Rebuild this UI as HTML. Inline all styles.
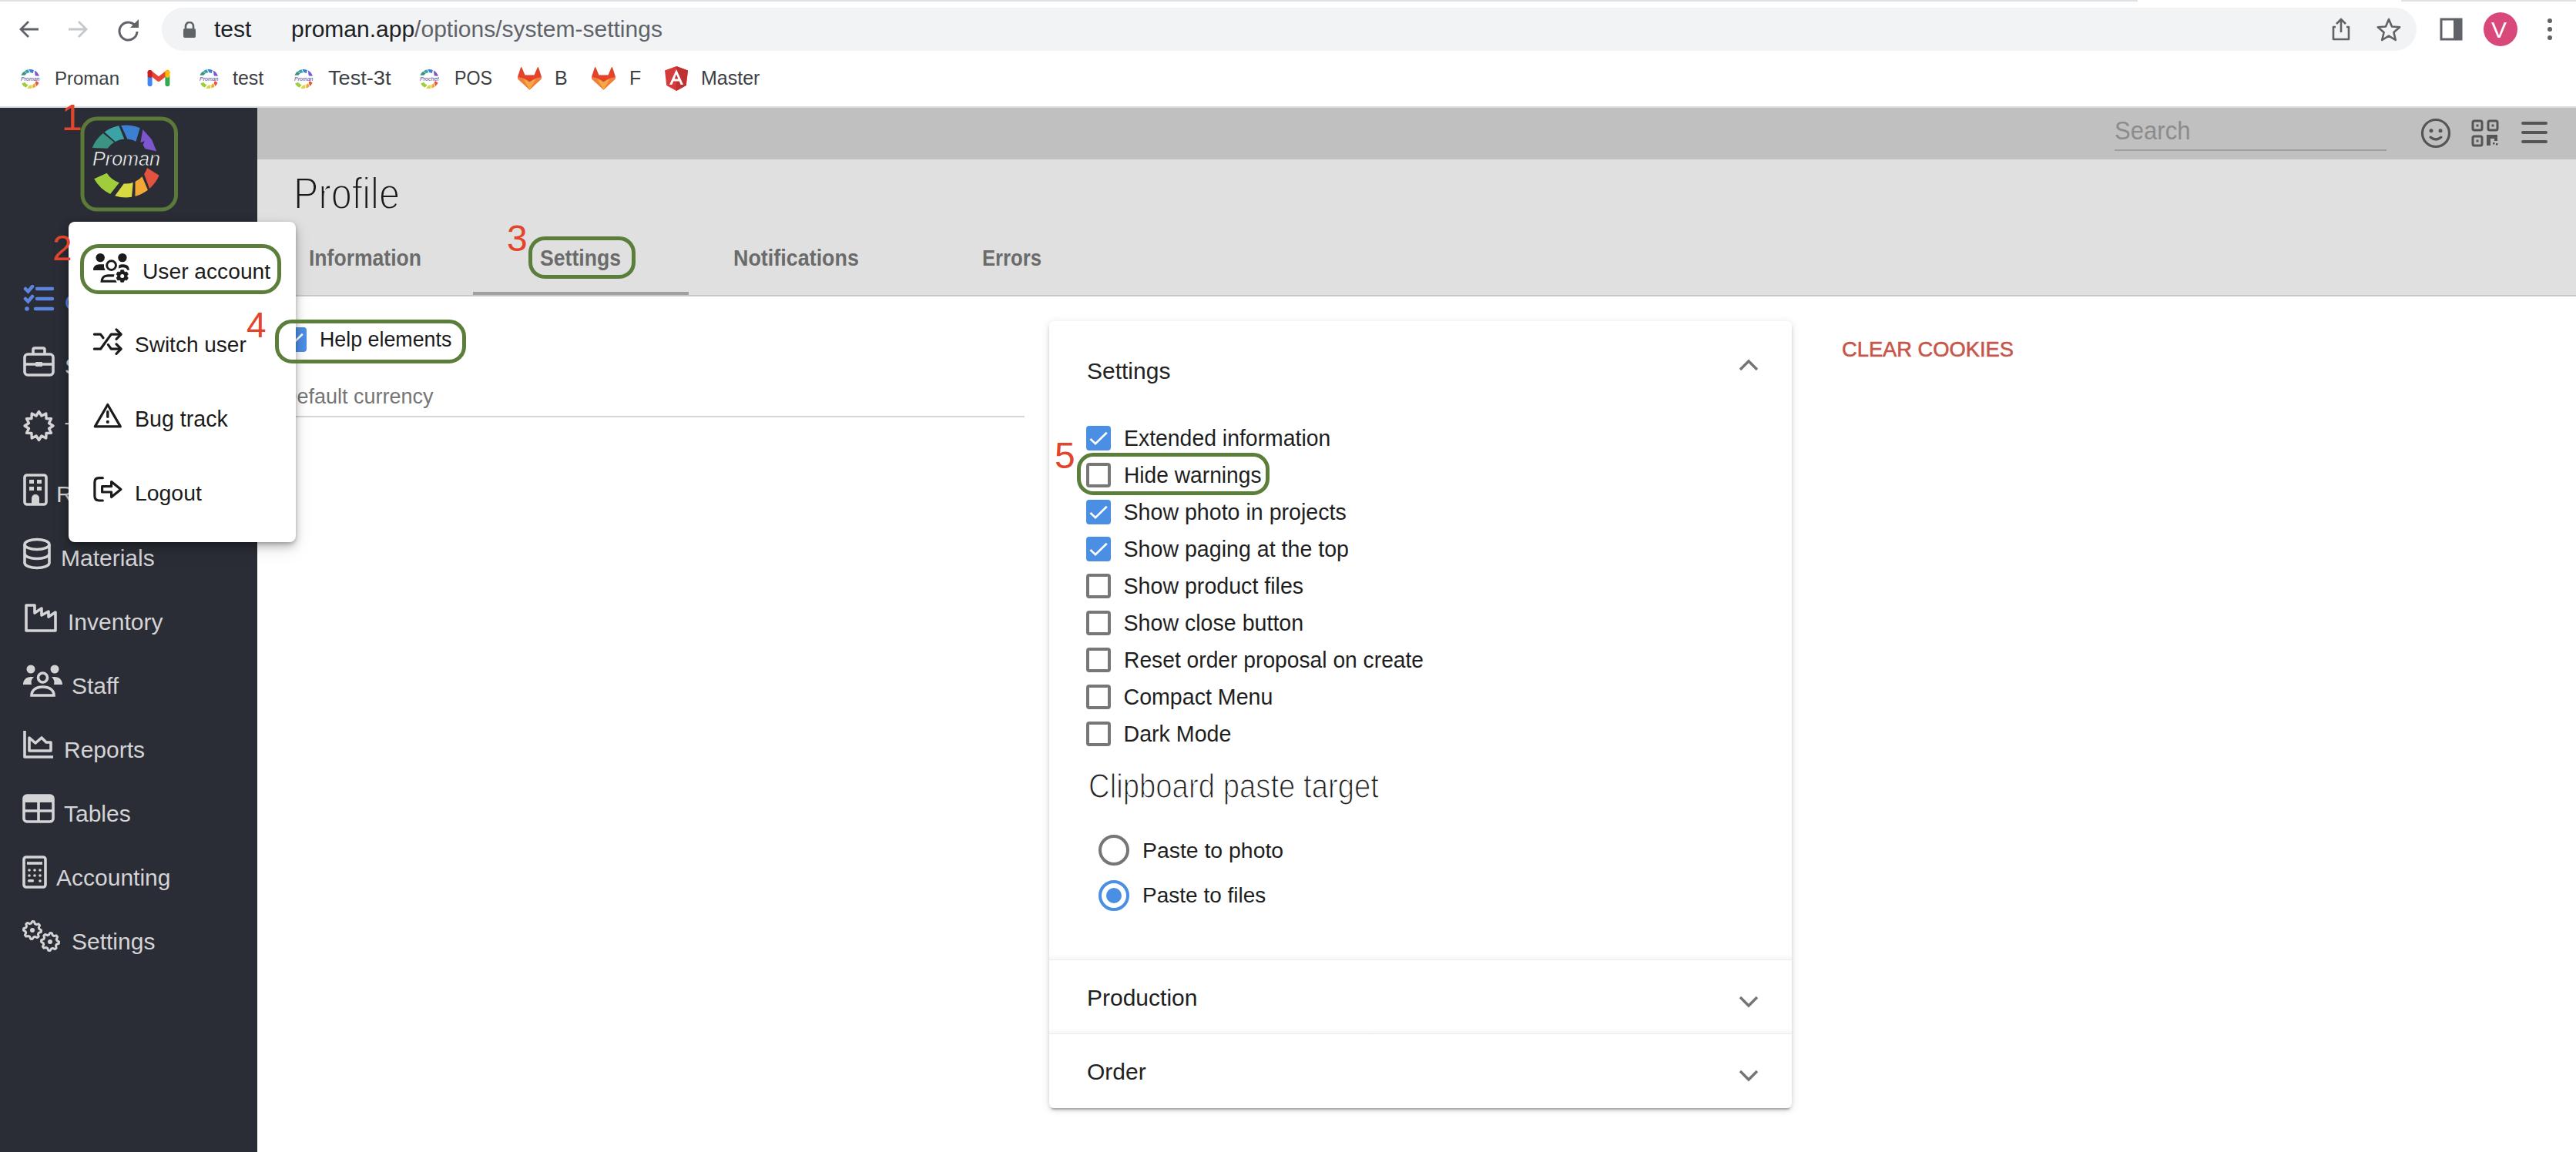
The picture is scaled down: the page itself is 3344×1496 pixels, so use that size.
<!DOCTYPE html>
<html><head><meta charset="utf-8"><style>
html,body{margin:0;padding:0;}
body{width:3344px;height:1496px;position:relative;overflow:hidden;background:#fff;font-family:"Liberation Sans",sans-serif;}
.t{position:absolute;white-space:nowrap;line-height:1;}
.r{position:absolute;box-sizing:content-box;}
</style></head><body>
<div class="r" style="left:0px;top:0px;width:3344px;height:140px;background:#ffffff;"></div>
<div class="r" style="left:0px;top:0px;width:2775px;height:2px;background:#dee1e6;"></div>
<div class="r" style="left:3117px;top:0px;width:227px;height:2px;background:#dee1e6;"></div>
<svg class="r" style="left:22px;top:22px;" width="32" height="32" viewBox="0 0 32 32"><path d="M28 16H6M15 6L5 16l10 10" fill="none" stroke="#5f6368" stroke-width="2.8"/></svg>
<svg class="r" style="left:85px;top:22px;" width="32" height="32" viewBox="0 0 32 32"><path d="M4 16h22M17 6l10 10-10 10" fill="none" stroke="#c4c7cb" stroke-width="2.8"/></svg>
<svg class="r" style="left:150px;top:22px;" width="34" height="34" viewBox="0 0 34 34"><path d="M26 12A11.5 11.5 0 1 0 28 19" fill="none" stroke="#5f6368" stroke-width="3"/><path d="M30 3v11H19z" fill="#5f6368"/></svg>
<div class="r" style="left:210px;top:10px;width:2927px;height:56px;background:#f1f3f4;border-radius:28px;"></div>
<svg class="r" style="left:236px;top:28px;" width="20" height="22" viewBox="0 0 20 22"><path d="M5 9V6a5 5 0 0 1 10 0v3" fill="none" stroke="#5f6368" stroke-width="2.6"/><rect x="2" y="9" width="16" height="12" rx="2" fill="#5f6368"/></svg>
<div class="t" style="left:278px;top:22.60px;font-size:30px;color:#202124;font-weight:400;font-family:'Liberation Sans', sans-serif;">test</div>
<div class="t" style="left:378px;top:22.60px;font-size:30px;color:#202124;font-weight:400;font-family:'Liberation Sans', sans-serif;">proman.app<span style="color:#5f6368">/options/system-settings</span></div>
<svg class="r" style="left:3024px;top:22px;" width="30" height="32" viewBox="0 0 30 32"><path d="M8 13H5v16h20V13h-3M15 3v17M9 9l6-6 6 6" fill="none" stroke="#5f6368" stroke-width="2.6" stroke-linejoin="round"/></svg>
<svg class="r" style="left:3084px;top:22px;" width="34" height="34" viewBox="0 0 34 34"><path d="M17 3l4 9.5 10.2.8-7.8 6.7 2.4 10L17 24.6 8.2 30l2.4-10-7.8-6.7 10.2-.8z" fill="none" stroke="#5f6368" stroke-width="2.6" stroke-linejoin="round"/></svg>
<svg class="r" style="left:3166px;top:22px;" width="32" height="32" viewBox="0 0 32 32"><rect x="3" y="3" width="26" height="26" fill="none" stroke="#5f6368" stroke-width="3"/><rect x="19" y="3" width="10" height="26" fill="#5f6368"/></svg>
<div class="r" style="left:3224px;top:16px;width:44px;height:44px;border-radius:50%;background:#d9487b;"></div>
<div class="t" style="left:3234px;top:23.60px;font-size:30px;color:#fff;font-weight:400;font-family:'Liberation Sans', sans-serif;font-weight:300;">V</div>
<div class="r" style="left:3307px;top:24px;width:6px;height:6px;border-radius:50%;background:#5f6368;"></div>
<div class="r" style="left:3307px;top:35px;width:6px;height:6px;border-radius:50%;background:#5f6368;"></div>
<div class="r" style="left:3307px;top:46px;width:6px;height:6px;border-radius:50%;background:#5f6368;"></div>
<svg class="r" style="left:26px;top:89px;" width="26" height="26" viewBox="0 0 26 26"><path d="M1.41 8.82A12.5 12.5 0 0 1 5.13 3.79L8.72 6.51A8.2 8.2 0 0 0 6.28 8.80Z" fill="#3a9383"/><path d="M5.65 3.39A12.5 12.5 0 0 1 10.61 1.23L12.43 5.32A8.2 8.2 0 0 0 9.15 6.26Z" fill="#3ba3a6"/><path d="M11.37 1.11A12.5 12.5 0 0 1 17.88 1.99L16.72 6.19A8.2 8.2 0 0 0 13.57 5.32Z" fill="#3d7fd2"/><path d="M18.87 2.46A12.5 12.5 0 0 1 24.89 9.64L20.10 9.40A8.2 8.2 0 0 0 19.63 8.68Z" fill="#7b56cf"/><path d="M2.07 19.56A12.5 12.5 0 0 0 7.62 24.78L10.60 21.34A8.2 8.2 0 0 1 6.05 17.85Z" fill="#9fcd3c"/><path d="M9.24 25.42A12.5 12.5 0 0 0 15.06 25.83L15.67 21.25A8.2 8.2 0 0 1 12.29 21.67Z" fill="#d6d942"/><path d="M16.24 25.57A12.5 12.5 0 0 0 20.61 23.42L19.00 19.09A8.2 8.2 0 0 1 16.47 20.93Z" fill="#f2a737"/><path d="M21.20 22.93A12.5 12.5 0 0 0 24.51 18.38L20.84 15.90A8.2 8.2 0 0 1 19.72 18.20Z" fill="#e4533f"/><text x="1" y="16" font-size="8" font-style="italic" textLength="24.5" lengthAdjust="spacingAndGlyphs" fill="#4b3d9a" font-family="Liberation Sans">Proman</text></svg>
<svg class="r" style="left:191px;top:90px;" width="30" height="23" viewBox="0 0 30 23"><g fill="none" stroke-width="6" stroke-linecap="round" stroke-linejoin="round"><path d="M3.6 9V19.3" stroke="#4285f4"/><path d="M26.4 9V19.3" stroke="#34a853"/><path d="M3.6 4L15 13L26.4 4" stroke="#ea4335"/><path d="M26.4 4V8" stroke="#fbbc04"/><path d="M3.6 4V8" stroke="#c5221f"/></g></svg>
<svg class="r" style="left:258px;top:89px;" width="26" height="26" viewBox="0 0 26 26"><path d="M1.41 8.82A12.5 12.5 0 0 1 5.13 3.79L8.72 6.51A8.2 8.2 0 0 0 6.28 8.80Z" fill="#3a9383"/><path d="M5.65 3.39A12.5 12.5 0 0 1 10.61 1.23L12.43 5.32A8.2 8.2 0 0 0 9.15 6.26Z" fill="#3ba3a6"/><path d="M11.37 1.11A12.5 12.5 0 0 1 17.88 1.99L16.72 6.19A8.2 8.2 0 0 0 13.57 5.32Z" fill="#3d7fd2"/><path d="M18.87 2.46A12.5 12.5 0 0 1 24.89 9.64L20.10 9.40A8.2 8.2 0 0 0 19.63 8.68Z" fill="#7b56cf"/><path d="M2.07 19.56A12.5 12.5 0 0 0 7.62 24.78L10.60 21.34A8.2 8.2 0 0 1 6.05 17.85Z" fill="#9fcd3c"/><path d="M9.24 25.42A12.5 12.5 0 0 0 15.06 25.83L15.67 21.25A8.2 8.2 0 0 1 12.29 21.67Z" fill="#d6d942"/><path d="M16.24 25.57A12.5 12.5 0 0 0 20.61 23.42L19.00 19.09A8.2 8.2 0 0 1 16.47 20.93Z" fill="#f2a737"/><path d="M21.20 22.93A12.5 12.5 0 0 0 24.51 18.38L20.84 15.90A8.2 8.2 0 0 1 19.72 18.20Z" fill="#e4533f"/><text x="1" y="16" font-size="8" font-style="italic" textLength="24.5" lengthAdjust="spacingAndGlyphs" fill="#4b3d9a" font-family="Liberation Sans">Proman</text></svg>
<svg class="r" style="left:381px;top:89px;" width="26" height="26" viewBox="0 0 26 26"><path d="M1.41 8.82A12.5 12.5 0 0 1 5.13 3.79L8.72 6.51A8.2 8.2 0 0 0 6.28 8.80Z" fill="#3a9383"/><path d="M5.65 3.39A12.5 12.5 0 0 1 10.61 1.23L12.43 5.32A8.2 8.2 0 0 0 9.15 6.26Z" fill="#3ba3a6"/><path d="M11.37 1.11A12.5 12.5 0 0 1 17.88 1.99L16.72 6.19A8.2 8.2 0 0 0 13.57 5.32Z" fill="#3d7fd2"/><path d="M18.87 2.46A12.5 12.5 0 0 1 24.89 9.64L20.10 9.40A8.2 8.2 0 0 0 19.63 8.68Z" fill="#7b56cf"/><path d="M2.07 19.56A12.5 12.5 0 0 0 7.62 24.78L10.60 21.34A8.2 8.2 0 0 1 6.05 17.85Z" fill="#9fcd3c"/><path d="M9.24 25.42A12.5 12.5 0 0 0 15.06 25.83L15.67 21.25A8.2 8.2 0 0 1 12.29 21.67Z" fill="#d6d942"/><path d="M16.24 25.57A12.5 12.5 0 0 0 20.61 23.42L19.00 19.09A8.2 8.2 0 0 1 16.47 20.93Z" fill="#f2a737"/><path d="M21.20 22.93A12.5 12.5 0 0 0 24.51 18.38L20.84 15.90A8.2 8.2 0 0 1 19.72 18.20Z" fill="#e4533f"/><text x="1" y="16" font-size="8" font-style="italic" textLength="24.5" lengthAdjust="spacingAndGlyphs" fill="#4b3d9a" font-family="Liberation Sans">Proman</text></svg>
<svg class="r" style="left:544px;top:89px;" width="26" height="26" viewBox="0 0 26 26"><path d="M1.41 8.82A12.5 12.5 0 0 1 5.13 3.79L8.72 6.51A8.2 8.2 0 0 0 6.28 8.80Z" fill="#3a9383"/><path d="M5.65 3.39A12.5 12.5 0 0 1 10.61 1.23L12.43 5.32A8.2 8.2 0 0 0 9.15 6.26Z" fill="#3ba3a6"/><path d="M11.37 1.11A12.5 12.5 0 0 1 17.88 1.99L16.72 6.19A8.2 8.2 0 0 0 13.57 5.32Z" fill="#3d7fd2"/><path d="M18.87 2.46A12.5 12.5 0 0 1 24.89 9.64L20.10 9.40A8.2 8.2 0 0 0 19.63 8.68Z" fill="#7b56cf"/><path d="M2.07 19.56A12.5 12.5 0 0 0 7.62 24.78L10.60 21.34A8.2 8.2 0 0 1 6.05 17.85Z" fill="#9fcd3c"/><path d="M9.24 25.42A12.5 12.5 0 0 0 15.06 25.83L15.67 21.25A8.2 8.2 0 0 1 12.29 21.67Z" fill="#d6d942"/><path d="M16.24 25.57A12.5 12.5 0 0 0 20.61 23.42L19.00 19.09A8.2 8.2 0 0 1 16.47 20.93Z" fill="#f2a737"/><path d="M21.20 22.93A12.5 12.5 0 0 0 24.51 18.38L20.84 15.90A8.2 8.2 0 0 1 19.72 18.20Z" fill="#e4533f"/><text x="1" y="16" font-size="8" font-style="italic" textLength="24.5" lengthAdjust="spacingAndGlyphs" fill="#4b3d9a" font-family="Liberation Sans">Prochef</text></svg>
<svg class="r" style="left:671px;top:86px;" width="33" height="32" viewBox="0 0 33 32"><path d="M5 1.5Q5.6 0.5 6.3 1.5L10.5 11.5H22.5L26.7 1.5Q27.4 0.5 28 1.5L31.6 12.5Q32.5 16 29.5 18.5L16.5 30.5L3.5 18.5Q0.5 16 1.4 12.5Z" fill="#e24329"/><path d="M1 14.5Q0.8 16.8 3.5 18.5L16.5 30.5L29.5 18.5Q32.2 16.8 32 14.5Q24.5 13.5 16.5 20.5Q8.5 13.5 1 14.5Z" fill="#f0803a"/><path d="M8.5 16.8L16.5 30.5L24.5 16.8Q20.5 17.8 16.5 20.5Q12.5 17.8 8.5 16.8Z" fill="#f4a744"/></svg>
<svg class="r" style="left:767px;top:86px;" width="33" height="32" viewBox="0 0 33 32"><path d="M5 1.5Q5.6 0.5 6.3 1.5L10.5 11.5H22.5L26.7 1.5Q27.4 0.5 28 1.5L31.6 12.5Q32.5 16 29.5 18.5L16.5 30.5L3.5 18.5Q0.5 16 1.4 12.5Z" fill="#e24329"/><path d="M1 14.5Q0.8 16.8 3.5 18.5L16.5 30.5L29.5 18.5Q32.2 16.8 32 14.5Q24.5 13.5 16.5 20.5Q8.5 13.5 1 14.5Z" fill="#f0803a"/><path d="M8.5 16.8L16.5 30.5L24.5 16.8Q20.5 17.8 16.5 20.5Q12.5 17.8 8.5 16.8Z" fill="#f4a744"/></svg>
<svg class="r" style="left:862px;top:85px;" width="32" height="34" viewBox="0 0 32 34"><path d="M16 1L1 6.5l2.3 19.5L16 33l12.7-7L31 6.5z" fill="#d63b3b"/><path d="M16 1v32l12.7-7L31 6.5z" fill="#bf3131"/><path d="M16 5L7 25h3.4l1.8-4.5h7.6l1.8 4.5H25zM13.6 17.4L16 11.6l2.4 5.8z" fill="#fff"/></svg>
<div class="t" style="left:71px;top:89.68px;font-size:24px;color:#3c4043;font-weight:400;font-family:'Liberation Sans', sans-serif;">Proman</div>
<div class="t" style="left:302px;top:88.83px;font-size:25px;color:#3c4043;font-weight:400;font-family:'Liberation Sans', sans-serif;">test</div>
<div class="t" style="left:426px;top:88.83px;font-size:25px;color:#3c4043;font-weight:400;font-family:'Liberation Sans', sans-serif;transform:scaleX(1.0863);transform-origin:0 0;">Test-3t</div>
<div class="t" style="left:590px;top:88.83px;font-size:25px;color:#3c4043;font-weight:400;font-family:'Liberation Sans', sans-serif;transform:scaleX(0.9281);transform-origin:0 0;">POS</div>
<div class="t" style="left:720px;top:88.83px;font-size:25px;color:#3c4043;font-weight:400;font-family:'Liberation Sans', sans-serif;">B</div>
<div class="t" style="left:817px;top:88.83px;font-size:25px;color:#3c4043;font-weight:400;font-family:'Liberation Sans', sans-serif;">F</div>
<div class="t" style="left:910px;top:88.83px;font-size:25px;color:#3c4043;font-weight:400;font-family:'Liberation Sans', sans-serif;">Master</div>
<div class="r" style="left:0px;top:138px;width:3344px;height:2px;background:#dadce0;"></div>
<div class="r" style="left:0px;top:140px;width:334px;height:1356px;background:#2a2d35;"></div>
<div class="r" style="left:334px;top:140px;width:3010px;height:67px;background:#c0c0c0;"></div>
<div class="r" style="left:334px;top:207px;width:3010px;height:177px;background:#e0e0e0;"></div>
<div class="r" style="left:334px;top:383px;width:3010px;height:2px;background:#c8c8c8;"></div>
<div class="r" style="left:334px;top:385px;width:3010px;height:1111px;background:#ffffff;"></div>
<div class="t" style="left:2745px;top:153.98px;font-size:32.5px;color:#8c8c8c;font-weight:400;font-family:'Liberation Sans', sans-serif;transform:scaleX(0.9565);transform-origin:0 0;">Search</div>
<div class="r" style="left:2745px;top:194px;width:353px;height:2px;background:#9e9e9e;"></div>
<svg class="r" style="left:3141px;top:152px;" width="42" height="42" viewBox="0 0 42 42"><circle cx="21" cy="21" r="17.5" fill="none" stroke="#555555" stroke-width="3.2"/><circle cx="15" cy="17.8" r="2.5" fill="#555555"/><circle cx="27" cy="17.8" r="2.5" fill="#555555"/><path d="M14.2 26.2q6.8 5.6 13.6 0" fill="none" stroke="#555555" stroke-width="3.4" stroke-linecap="round"/></svg>
<svg class="r" style="left:3208px;top:155px;" width="36" height="36" viewBox="0 0 36 36"><g fill="none" stroke="#555555" stroke-width="3"><rect x="2" y="2" width="12" height="12" rx="2"/><rect x="22" y="2" width="12" height="12" rx="2"/><rect x="2" y="22" width="12" height="12" rx="2"/></g><g fill="#555555"><rect x="6.5" y="6.5" width="3" height="3"/><rect x="26.5" y="6.5" width="3" height="3"/><rect x="6.5" y="26.5" width="3" height="3"/><rect x="20" y="20" width="5" height="14"/><rect x="25" y="20" width="5" height="5"/><rect x="30" y="20" width="4" height="8"/><rect x="28" y="30" width="2.5" height="2.5"/><rect x="32" y="31" width="2.5" height="2.5"/></g></svg>
<div class="r" style="left:3273px;top:158px;width:34px;height:4px;background:#555555;border-radius:2px;"></div>
<div class="r" style="left:3273px;top:170px;width:34px;height:4px;background:#555555;border-radius:2px;"></div>
<div class="r" style="left:3273px;top:182px;width:34px;height:4px;background:#555555;border-radius:2px;"></div>
<div class="t" style="left:381px;top:222.74px;font-size:57px;color:#1a1a1a;font-weight:400;font-family:'Liberation Sans', sans-serif;transform:scaleX(0.8541);transform-origin:0 0;-webkit-text-stroke:2px #e0e0e0;">Profile</div>
<div class="t" style="left:400.5px;top:320.78px;font-size:28.6px;color:#6b6b6b;font-weight:700;font-family:'Liberation Sans', sans-serif;transform:scaleX(0.9282);transform-origin:0 0;">Information</div>
<div class="t" style="left:701px;top:320.78px;font-size:28.6px;color:#6b6b6b;font-weight:700;font-family:'Liberation Sans', sans-serif;transform:scaleX(0.9307);transform-origin:0 0;">Settings</div>
<div class="t" style="left:952px;top:320.78px;font-size:28.6px;color:#6b6b6b;font-weight:700;font-family:'Liberation Sans', sans-serif;transform:scaleX(0.9411);transform-origin:0 0;">Notifications</div>
<div class="t" style="left:1275px;top:320.78px;font-size:28.6px;color:#6b6b6b;font-weight:700;font-family:'Liberation Sans', sans-serif;transform:scaleX(0.897);transform-origin:0 0;">Errors</div>
<div class="r" style="left:614px;top:379px;width:280px;height:4px;background:#a0a0a0;"></div>
<div class="r" style="left:366px;top:425px;width:32px;height:32px;background:#4b8fe5;border-radius:4px;"></div>
<svg class="r" style="left:366px;top:425px;" width="32" height="32" viewBox="0 0 32 32"><path d="M5.5 17L12 23.3L26.8 8.7" fill="none" stroke="#fff" stroke-width="2.6"/></svg>
<div class="t" style="left:415px;top:428.31px;font-size:26.8px;color:#1a1a1a;font-weight:400;font-family:'Liberation Sans', sans-serif;">Help elements</div>
<div class="t" style="left:366px;top:502.14px;font-size:27px;color:#757575;font-weight:400;font-family:'Liberation Sans', sans-serif;">Default currency</div>
<div class="r" style="left:366px;top:540px;width:964px;height:2px;background:#d6d6d6;"></div>
<div class="r" style="left:1362px;top:417px;width:964px;height:1022px;background:#fff;border-radius:6px;box-shadow:0 5px 2px -3px rgba(0,0,0,.2),0 3px 4px 0 rgba(0,0,0,.13),0 2px 12px 0 rgba(0,0,0,.11);"></div>
<div class="t" style="left:1411px;top:466.60px;font-size:30px;color:#212121;font-weight:400;font-family:'Liberation Sans', sans-serif;">Settings</div>
<svg class="r" style="left:2255px;top:463px;" width="30" height="22" viewBox="0 0 30 22"><path d="M4 17l11-11 11 11" fill="none" stroke="#757575" stroke-width="3.4"/></svg>
<div class="r" style="left:1410px;top:553px;width:32px;height:32px;background:#4b8fe5;border-radius:4px;"></div>
<svg class="r" style="left:1410px;top:553px;" width="32" height="32" viewBox="0 0 32 32"><path d="M5.5 17L12 23.3L26.8 8.7" fill="none" stroke="#fff" stroke-width="2.6"/></svg>
<div class="t" style="left:1458.5px;top:555.28px;font-size:28.6px;color:#1e1e1e;font-weight:400;font-family:'Liberation Sans', sans-serif;transform:scaleX(0.993);transform-origin:0 0;">Extended information</div>
<div class="r" style="left:1410px;top:601px;width:24px;height:24px;border:4px solid #777777;border-radius:4px;"></div>
<div class="t" style="left:1458.5px;top:603.28px;font-size:28.6px;color:#1e1e1e;font-weight:400;font-family:'Liberation Sans', sans-serif;transform:scaleX(0.985);transform-origin:0 0;">Hide warnings</div>
<div class="r" style="left:1410px;top:649px;width:32px;height:32px;background:#4b8fe5;border-radius:4px;"></div>
<svg class="r" style="left:1410px;top:649px;" width="32" height="32" viewBox="0 0 32 32"><path d="M5.5 17L12 23.3L26.8 8.7" fill="none" stroke="#fff" stroke-width="2.6"/></svg>
<div class="t" style="left:1458.5px;top:651.28px;font-size:28.6px;color:#1e1e1e;font-weight:400;font-family:'Liberation Sans', sans-serif;">Show photo in projects</div>
<div class="r" style="left:1410px;top:697px;width:32px;height:32px;background:#4b8fe5;border-radius:4px;"></div>
<svg class="r" style="left:1410px;top:697px;" width="32" height="32" viewBox="0 0 32 32"><path d="M5.5 17L12 23.3L26.8 8.7" fill="none" stroke="#fff" stroke-width="2.6"/></svg>
<div class="t" style="left:1458.5px;top:699.28px;font-size:28.6px;color:#1e1e1e;font-weight:400;font-family:'Liberation Sans', sans-serif;">Show paging at the top</div>
<div class="r" style="left:1410px;top:745px;width:24px;height:24px;border:4px solid #777777;border-radius:4px;"></div>
<div class="t" style="left:1458.5px;top:747.28px;font-size:28.6px;color:#1e1e1e;font-weight:400;font-family:'Liberation Sans', sans-serif;">Show product files</div>
<div class="r" style="left:1410px;top:793px;width:24px;height:24px;border:4px solid #777777;border-radius:4px;"></div>
<div class="t" style="left:1458.5px;top:795.28px;font-size:28.6px;color:#1e1e1e;font-weight:400;font-family:'Liberation Sans', sans-serif;">Show close button</div>
<div class="r" style="left:1410px;top:841px;width:24px;height:24px;border:4px solid #777777;border-radius:4px;"></div>
<div class="t" style="left:1458.5px;top:843.28px;font-size:28.6px;color:#1e1e1e;font-weight:400;font-family:'Liberation Sans', sans-serif;transform:scaleX(0.987);transform-origin:0 0;">Reset order proposal on create</div>
<div class="r" style="left:1410px;top:889px;width:24px;height:24px;border:4px solid #777777;border-radius:4px;"></div>
<div class="t" style="left:1458.5px;top:891.28px;font-size:28.6px;color:#1e1e1e;font-weight:400;font-family:'Liberation Sans', sans-serif;">Compact Menu</div>
<div class="r" style="left:1410px;top:937px;width:24px;height:24px;border:4px solid #777777;border-radius:4px;"></div>
<div class="t" style="left:1458.5px;top:939.28px;font-size:28.6px;color:#1e1e1e;font-weight:400;font-family:'Liberation Sans', sans-serif;">Dark Mode</div>
<div class="t" style="left:1413px;top:1000.17px;font-size:43.5px;color:#222222;font-weight:400;font-family:'Liberation Sans', sans-serif;transform:scaleX(0.8808);transform-origin:0 0;-webkit-text-stroke:1.2px #ffffff;">Clipboard paste target</div>
<div class="r" style="left:1426px;top:1084px;width:32px;height:32px;border:4px solid #767676;border-radius:50%;"></div>
<div class="t" style="left:1483px;top:1089.95px;font-size:28.4px;color:#1e1e1e;font-weight:400;font-family:'Liberation Sans', sans-serif;">Paste to photo</div>
<div class="r" style="left:1426px;top:1143px;width:32px;height:32px;border:4px solid #4b8fe5;border-radius:50%;"></div>
<div class="r" style="left:1436px;top:1153px;width:20px;height:20px;background:#4b8fe5;border-radius:50%;"></div>
<div class="t" style="left:1483px;top:1149.29px;font-size:28px;color:#1e1e1e;font-weight:400;font-family:'Liberation Sans', sans-serif;">Paste to files</div>
<div class="r" style="left:1362px;top:1239px;width:964px;height:7px;background:linear-gradient(rgba(0,0,0,0),rgba(0,0,0,0.035));"></div>
<div class="r" style="left:1362px;top:1246px;width:964px;height:1px;background:#ebebeb;"></div>
<div class="t" style="left:1411px;top:1280.60px;font-size:30px;color:#212121;font-weight:400;font-family:'Liberation Sans', sans-serif;">Production</div>
<svg class="r" style="left:2255px;top:1289px;" width="30" height="22" viewBox="0 0 30 22"><path d="M4 6l11 11 11-11" fill="none" stroke="#757575" stroke-width="3.4"/></svg>
<div class="r" style="left:1362px;top:1335px;width:964px;height:7px;background:linear-gradient(rgba(0,0,0,0),rgba(0,0,0,0.035));"></div>
<div class="r" style="left:1362px;top:1342px;width:964px;height:1px;background:#ebebeb;"></div>
<div class="t" style="left:1411px;top:1376.60px;font-size:30px;color:#212121;font-weight:400;font-family:'Liberation Sans', sans-serif;">Order</div>
<svg class="r" style="left:2255px;top:1385px;" width="30" height="22" viewBox="0 0 30 22"><path d="M4 6l11 11 11-11" fill="none" stroke="#757575" stroke-width="3.4"/></svg>
<div class="t" style="left:2391px;top:439.63px;font-size:27.6px;color:#c7564a;font-weight:400;font-family:'Liberation Sans', sans-serif;transform:scaleX(0.9891);transform-origin:0 0;-webkit-text-stroke:0.6px #c7564a;">CLEAR COOKIES</div>
<div class="t" style="left:84px;top:377.60px;font-size:30px;color:#5b85df;font-weight:400;font-family:'Liberation Sans', sans-serif;">Orders</div>
<div class="t" style="left:84px;top:460.60px;font-size:30px;color:#d4d4d6;font-weight:400;font-family:'Liberation Sans', sans-serif;">Sales</div>
<div class="t" style="left:84px;top:543.60px;font-size:30px;color:#d4d4d6;font-weight:400;font-family:'Liberation Sans', sans-serif;">Technology</div>
<div class="t" style="left:73px;top:626.60px;font-size:30px;color:#d4d4d6;font-weight:400;font-family:'Liberation Sans', sans-serif;">Resources</div>
<div class="t" style="left:79px;top:709.60px;font-size:30px;color:#d4d4d6;font-weight:400;font-family:'Liberation Sans', sans-serif;">Materials</div>
<div class="t" style="left:88px;top:792.60px;font-size:30px;color:#d4d4d6;font-weight:400;font-family:'Liberation Sans', sans-serif;">Inventory</div>
<div class="t" style="left:93px;top:875.60px;font-size:30px;color:#d4d4d6;font-weight:400;font-family:'Liberation Sans', sans-serif;">Staff</div>
<div class="t" style="left:83px;top:958.60px;font-size:30px;color:#d4d4d6;font-weight:400;font-family:'Liberation Sans', sans-serif;">Reports</div>
<div class="t" style="left:83px;top:1041.60px;font-size:30px;color:#d4d4d6;font-weight:400;font-family:'Liberation Sans', sans-serif;">Tables</div>
<div class="t" style="left:73px;top:1124.60px;font-size:30px;color:#d4d4d6;font-weight:400;font-family:'Liberation Sans', sans-serif;">Accounting</div>
<div class="t" style="left:93px;top:1207.60px;font-size:30px;color:#d4d4d6;font-weight:400;font-family:'Liberation Sans', sans-serif;">Settings</div>
<svg class="r" style="left:30px;top:370px;" width="41" height="34" viewBox="0 0 41 34"><g fill="none" stroke="#5b85df" stroke-width="4.5" stroke-linecap="round"><path d="M3 5l3.5 3.5L12 2M3 18l3.5 3.5L12 15"/><path d="M18 5h20M18 18h20M16 31h22"/></g><circle cx="5" cy="31" r="2.8" fill="#5b85df"/></svg>
<svg class="r" style="left:30px;top:449px;" width="41" height="40" viewBox="0 0 41 40"><g fill="none" stroke="#d4d4d6" stroke-width="3.6"><rect x="2" y="11" width="37" height="27" rx="4"/><path d="M13 11V5a2 2 0 0 1 2-2h11a2 2 0 0 1 2 2v6M2 24h37"/></g><rect x="16" y="21" width="9" height="6" rx="1" fill="#d4d4d6"/></svg>
<svg class="r" style="left:29px;top:532px;" width="43" height="43" viewBox="0 0 43 43"><polygon points="21.50,2.50 24.99,7.96 30.75,4.98 31.05,11.45 37.52,11.75 34.54,17.51 40.00,21.00 34.54,24.49 37.52,30.25 31.05,30.55 30.75,37.02 24.99,34.04 21.50,39.50 18.01,34.04 12.25,37.02 11.95,30.55 5.48,30.25 8.46,24.49 3.00,21.00 8.46,17.51 5.48,11.75 11.95,11.45 12.25,4.98 18.01,7.96" fill="none" stroke="#d4d4d6" stroke-width="3.4" stroke-linejoin="round"/></svg>
<svg class="r" style="left:30px;top:615px;" width="32" height="42" viewBox="0 0 32 42"><rect x="2" y="2" width="28" height="38" rx="3" fill="none" stroke="#d4d4d6" stroke-width="3.6"/><g fill="#d4d4d6"><rect x="8" y="8" width="6" height="5"/><rect x="18" y="8" width="6" height="5"/><rect x="8" y="17" width="6" height="5"/><rect x="18" y="17" width="6" height="5"/><path d="M11 40v-8a5 5 0 0 1 10 0v8z"/></g></svg>
<svg class="r" style="left:29px;top:698px;" width="38" height="42" viewBox="0 0 38 42"><g fill="none" stroke="#d4d4d6" stroke-width="3.6"><ellipse cx="19" cy="9" rx="16" ry="6.5"/><path d="M3 9v24c0 3.6 7.2 6.5 16 6.5s16-2.9 16-6.5V9M3 21c0 3.6 7.2 6.5 16 6.5s16-2.9 16-6.5"/></g></svg>
<svg class="r" style="left:31px;top:783px;" width="44" height="38" viewBox="0 0 44 38"><path d="M3 3v33h38V12l-9 6v-7l-9 5V7l-9 6V3z" fill="none" stroke="#d4d4d6" stroke-width="3.6" stroke-linejoin="round"/></svg>
<svg class="r" style="left:29px;top:863px;" width="54" height="42" viewBox="0 0 54 42"><g fill="#d4d4d6"><circle cx="11" cy="6" r="5.5"/><circle cx="42" cy="6" r="5.5"/><path d="M1 26c0-6 4-10 10-10h4a10 10 0 0 0-3 10z"/><path d="M52 26c0-6-4-10-10-10h-4a10 10 0 0 1 3 10z"/></g><g fill="none" stroke="#d4d4d6" stroke-width="3.6"><circle cx="26.5" cy="17" r="6"/><path d="M12 40c0-7 6-11 14.5-11S41 33 41 40z"/></g></svg>
<svg class="r" style="left:29px;top:948px;" width="42" height="38" viewBox="0 0 42 38"><path d="M3 1v34h37M9 27V10l8 7 8-7 6 6h6v11z" fill="none" stroke="#d4d4d6" stroke-width="3.6" stroke-linejoin="round"/></svg>
<svg class="r" style="left:29px;top:1031px;" width="42" height="38" viewBox="0 0 42 38"><rect x="2" y="2" width="38" height="34" rx="4" fill="none" stroke="#d4d4d6" stroke-width="3.6"/><rect x="2" y="2" width="38" height="9" rx="3" fill="#d4d4d6"/><path d="M2 22h38M21 10v26" stroke="#d4d4d6" stroke-width="3.6"/></svg>
<svg class="r" style="left:29px;top:1111px;" width="34" height="44" viewBox="0 0 34 44"><rect x="2" y="2" width="28" height="39" rx="3" fill="none" stroke="#d4d4d6" stroke-width="3.6"/><path d="M6 10h20" stroke="#d4d4d6" stroke-width="3.6"/><g fill="#d4d4d6"><circle cx="9" cy="19" r="1.8"/><circle cx="16" cy="19" r="1.8"/><circle cx="23" cy="19" r="1.8"/><circle cx="9" cy="26" r="1.8"/><circle cx="16" cy="26" r="1.8"/><circle cx="23" cy="26" r="1.8"/><rect x="7" y="31" width="8" height="3.6" rx="1.5"/><circle cx="23" cy="33" r="1.8"/></g></svg>
<svg class="r" style="left:29px;top:1195px;" width="54" height="44" viewBox="0 0 54 44"><polygon points="24.50,13.00 24.28,15.24 21.31,16.44 20.48,18.00 21.13,21.13 19.39,22.56 16.44,21.31 14.76,21.83 13.00,24.50 10.76,24.28 9.56,21.31 8.00,20.48 4.87,21.13 3.44,19.39 4.69,16.44 4.17,14.76 1.50,13.00 1.72,10.76 4.69,9.56 5.52,8.00 4.87,4.87 6.61,3.44 9.56,4.69 11.24,4.17 13.00,1.50 15.24,1.72 16.44,4.69 18.00,5.52 21.13,4.87 22.56,6.61 21.31,9.56 21.83,11.24" fill="none" stroke="#d4d4d6" stroke-width="3" stroke-linejoin="round"/><circle cx="13" cy="13" r="3" fill="#d4d4d6"/><polygon points="47.50,28.00 47.28,30.24 44.31,31.44 43.48,33.00 44.13,36.13 42.39,37.56 39.44,36.31 37.76,36.83 36.00,39.50 33.76,39.28 32.56,36.31 31.00,35.48 27.87,36.13 26.44,34.39 27.69,31.44 27.17,29.76 24.50,28.00 24.72,25.76 27.69,24.56 28.52,23.00 27.87,19.87 29.61,18.44 32.56,19.69 34.24,19.17 36.00,16.50 38.24,16.72 39.44,19.69 41.00,20.52 44.13,19.87 45.56,21.61 44.31,24.56 44.83,26.24" fill="none" stroke="#d4d4d6" stroke-width="3" stroke-linejoin="round"/><circle cx="36" cy="28" r="3" fill="#d4d4d6"/></svg>
<svg class="r" style="left:104px;top:151px;" width="128" height="124" viewBox="0 0 128 124"><rect x="3" y="3" width="121.5" height="118" rx="19" fill="none" stroke="#5b7a39" stroke-width="5"/><path d="M15.72 40.89A47 47 0 0 1 29.72 21.97L44.15 33.77A29 29 0 0 0 35.54 41.87Z" fill="#3a9383"/><path d="M31.67 20.48A47 47 0 0 1 50.33 12.36L57.28 29.57A29 29 0 0 0 45.69 32.89Z" fill="#3ba3a6"/><path d="M53.17 11.90A47 47 0 0 1 77.66 15.24L72.47 32.66A29 29 0 0 0 61.32 29.57Z" fill="#3d7fd2"/><polygon points="81.37,17.00 93.01,30.22 99.24,45.52 84.46,42.16 81.60,36.97 83.85,32.17 78.39,34.07" fill="#7b56cf"/><path d="M18.19 81.29A47 47 0 0 0 39.07 100.92L50.82 86.23A29 29 0 0 1 34.71 73.87Z" fill="#9fcd3c"/><path d="M45.17 103.32A47 47 0 0 0 67.06 104.86L68.74 85.92A29 29 0 0 1 56.77 87.39Z" fill="#d6d942"/><path d="M71.46 103.90A47 47 0 0 0 87.91 95.79L80.51 78.28A29 29 0 0 1 71.56 84.78Z" fill="#f2a737"/><path d="M90.13 93.97A47 47 0 0 0 102.56 76.86L87.03 66.98A29 29 0 0 1 83.06 75.13Z" fill="#e4533f"/><text x="16" y="64" font-size="26" font-style="italic" textLength="88" lengthAdjust="spacingAndGlyphs" fill="#fff" stroke="#2a2d35" stroke-width="0.6" paint-order="normal" font-family="Liberation Sans">Proman</text></svg>
<div class="r" style="left:89px;top:288px;width:295px;height:416px;background:#fff;border-radius:8px;box-shadow:0 5px 12px rgba(0,0,0,.26),0 2px 4px rgba(0,0,0,.16),0 10px 26px rgba(0,0,0,.08);"></div>
<div class="t" style="left:185px;top:338.12px;font-size:28.2px;color:#1b1b1b;font-weight:400;font-family:'Liberation Sans', sans-serif;">User account</div>
<div class="t" style="left:175px;top:433.79px;font-size:28px;color:#1b1b1b;font-weight:400;font-family:'Liberation Sans', sans-serif;">Switch user</div>
<div class="t" style="left:175px;top:529.78px;font-size:28.6px;color:#1b1b1b;font-weight:400;font-family:'Liberation Sans', sans-serif;">Bug track</div>
<div class="t" style="left:175px;top:625.95px;font-size:28.4px;color:#1b1b1b;font-weight:400;font-family:'Liberation Sans', sans-serif;">Logout</div>
<svg class="r" style="left:115px;top:322px;" width="60" height="50" viewBox="0 0 60 50"><g fill="#1b1b1b"><circle cx="15.2" cy="12.6" r="5.7"/><circle cx="43.9" cy="12.6" r="5.7"/><path d="M6 29Q6 21.3 14 21.3H20Q19.2 25.5 21.6 29Z"/><path d="M38.8 26.8L39.6 22Q41 21.3 45 21.3Q52.6 21.3 53 28.7L50.4 28.7Q49 25.3 44 25.3Q41 25.3 38.8 26.8Z"/><path d="M15.5 44.8Q15.5 34.2 26 34.2H33.6L32.6 37.4H26Q19 37.4 19 41.8H35L36.8 44.8Z"/></g><circle cx="29.6" cy="22.6" r="5.9" fill="none" stroke="#1b1b1b" stroke-width="2.9"/><circle cx="44" cy="37" r="9.5" fill="#fff"/><polygon points="45.57,44.28 41.83,44.28 41.33,42.23 39.93,41.42 37.90,42.01 36.03,38.77 37.55,37.31 37.55,35.69 36.03,34.23 37.90,30.99 39.93,31.58 41.33,30.77 41.83,28.72 45.57,28.72 46.07,30.77 47.47,31.58 49.50,30.99 51.37,34.23 49.85,35.69 49.85,37.31 51.37,38.77 49.50,42.01 47.47,41.42 46.07,42.23" fill="#1b1b1b" stroke="#1b1b1b" stroke-width="0.8" stroke-linejoin="round"/><circle cx="43.7" cy="36.5" r="2.5" fill="#fff"/></svg>
<svg class="r" style="left:110px;top:415px;" width="60" height="55" viewBox="0 0 60 55"><g fill="none" stroke="#1b1b1b" stroke-width="3.2" stroke-linecap="round" stroke-linejoin="round"><path d="M12.4 19.1H20.5L24 23.8"/><path d="M12.4 38.2H20.5L34.3 19.1H46.5"/><path d="M41 12.9L47.2 19.1L41 25.3"/><path d="M30.4 32.6L34.3 38.1H46.5"/><path d="M41 31.9L47.2 38.1L41 44.3"/></g></svg>
<svg class="r" style="left:110px;top:510px;" width="60" height="55" viewBox="0 0 60 55"><path d="M29.8 15.5L13.3 43.9H46.3Z" fill="none" stroke="#1b1b1b" stroke-width="3.2" stroke-linejoin="round"/><path d="M29.8 24.6V31.2" stroke="#1b1b1b" stroke-width="3.4" stroke-linecap="round"/><circle cx="29.8" cy="37.9" r="2.1" fill="#1b1b1b"/></svg>
<svg class="r" style="left:110px;top:605px;" width="60" height="55" viewBox="0 0 60 55"><g fill="none" stroke="#1b1b1b" stroke-width="3.2" stroke-linecap="round" stroke-linejoin="round"><path d="M23.3 15.7H18.6Q12.9 15.7 12.9 21.4V39.3Q12.9 45 18.6 45H23.3"/><path d="M22.6 26.7H34.6V20.5L46.9 30.5L34.6 40.6V34H22.6Z"/></g></svg>
<div class="r" style="left:104px;top:317px;width:251px;height:55px;border:5px solid #5b7f3a;border-radius:24px;"></div>
<div class="r" style="left:686px;top:307px;width:129px;height:45px;border:5px solid #5b7f3a;border-radius:21px;"></div>
<div class="r" style="left:357px;top:415px;width:238px;height:47px;border:5px solid #5b7f3a;border-radius:22px;"></div>
<div class="r" style="left:1398px;top:588px;width:240px;height:45px;border:5px solid #5b7f3a;border-radius:21px;"></div>
<div class="t" style="left:80px;top:128.44px;font-size:48.5px;color:#e2452c;font-weight:400;font-family:'Liberation Sans', sans-serif;">1</div>
<div class="t" style="left:68px;top:299.05px;font-size:46px;color:#e2452c;font-weight:400;font-family:'Liberation Sans', sans-serif;">2</div>
<div class="t" style="left:658px;top:286.36px;font-size:48px;color:#e2452c;font-weight:400;font-family:'Liberation Sans', sans-serif;">3</div>
<div class="t" style="left:320px;top:399.05px;font-size:46px;color:#e2452c;font-weight:400;font-family:'Liberation Sans', sans-serif;">4</div>
<div class="t" style="left:1369px;top:568.36px;font-size:48px;color:#e2452c;font-weight:400;font-family:'Liberation Sans', sans-serif;">5</div>
</body></html>
